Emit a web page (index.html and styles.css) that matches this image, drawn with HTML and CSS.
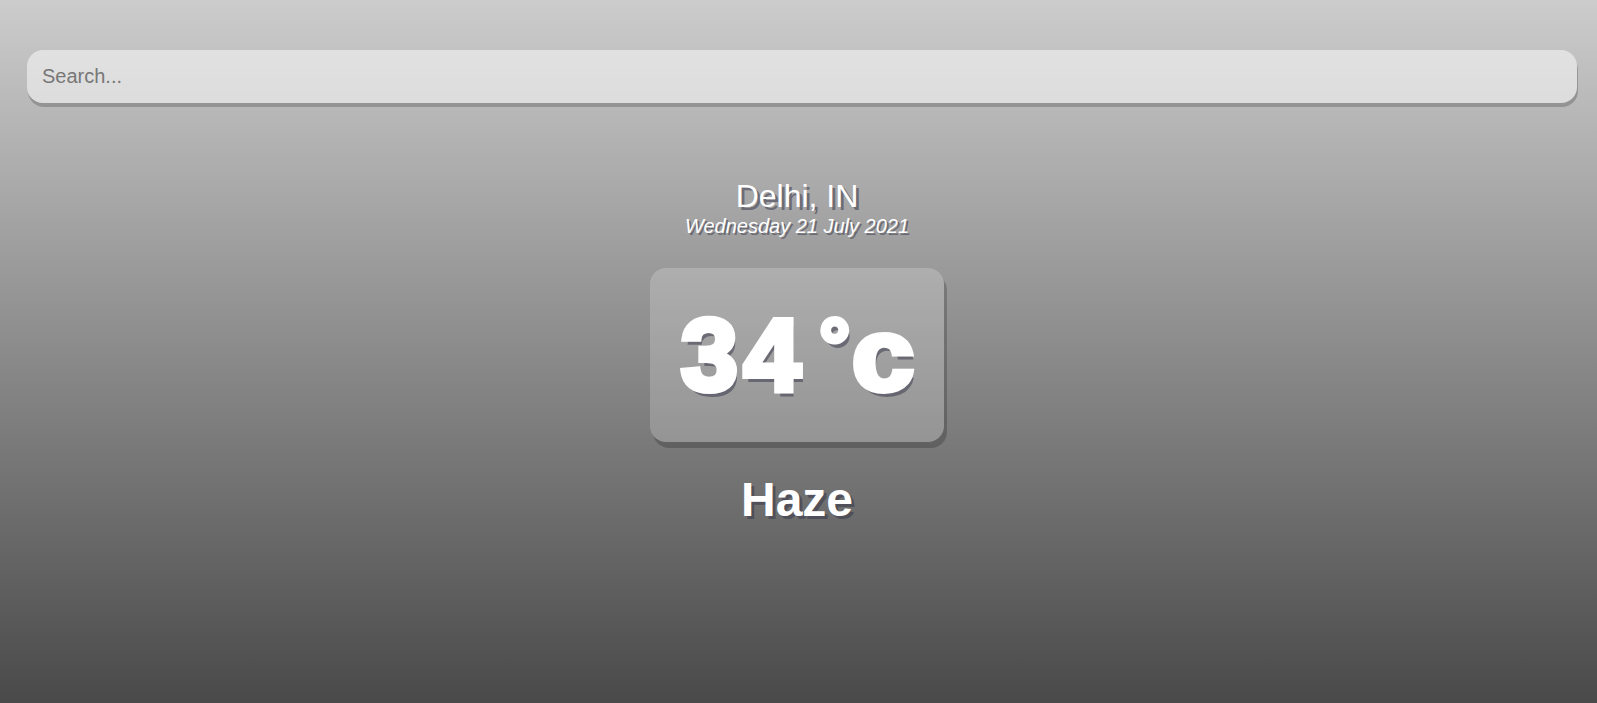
FILE: index.html
```html
<!DOCTYPE html>
<html lang="en">
<head>
<meta charset="utf-8">
<title>Weather</title>
<link rel="stylesheet" href="styles.css">
</head>
<body>
<main class="app">
  <div class="search-box">
    <input type="text" class="search-bar" placeholder="Search...">
  </div>
  <div class="content">
    <div class="location-box">
      <div class="location">Delhi, IN</div>
      <div class="date">Wednesday 21 July 2021</div>
    </div>
    <div class="weather-box">
      <div class="temp"><span class="t3">3</span><span class="t4">4</span><span class="tdeg">°</span><span class="tc">c</span></div>
      <div class="weather">Haze</div>
    </div>
  </div>
</main>
</body>
</html>
```
FILE: styles.css
```css
* { box-sizing: border-box; }
html, body { margin: 0; padding: 0; height: 100%; overflow: hidden; background: #fff; }
body { font-family: "Liberation Sans", Arial, sans-serif; }

.app {
  height: 703px;
  background-image: linear-gradient(to bottom, rgba(0,0,0,0.2) 0px, rgba(0,0,0,0.75) 753px);
  background-size: 100% 753px;
  background-repeat: no-repeat;
  padding-top: 50px;
}

.search-box {
  padding: 0 20px 0 27px;
  margin-bottom: 75px;
}

.search-bar {
  display: block;
  width: 100%;
  height: 53px;
  padding: 15px;
  appearance: none;
  border: none;
  outline: none;
  background-color: rgba(255,255,255,0.5);
  border-radius: 16px;
  box-shadow: 1px 4px rgba(0,0,0,0.2);
  color: #313131;
  font-family: "Liberation Sans", Arial, sans-serif;
  font-size: 20px;
}
.search-bar::placeholder { color: #777; }

.content {
  padding: 0 28px 0 25px;
}

.location {
  color: #fff;
  font-size: 32px;
  line-height: 37px;
  text-align: center;
  text-shadow: 3px 3px rgba(50,50,70,0.5);
}

.date {
  color: #fff;
  font-size: 20px;
  line-height: 23px;
  font-style: italic;
  text-align: center;
  text-shadow: 2px 2px rgba(50,50,70,0.5);
}

.weather-box { text-align: center; }

.temp {
  display: inline-block;
  margin: 30px auto;
  background-color: rgba(255,255,255,0.2);
  border-radius: 16px;
  padding: 15px 25px;
  height: 174px;
  width: 294px;
  color: #fff;
  font-size: 102px;
  font-weight: 700;
  line-height: 144px;
  -webkit-text-stroke: 6px #fff;
  text-shadow: 3px 6px rgba(50,50,70,0.5);
  text-align: left;
  white-space: nowrap;
  box-shadow: 3px 6px rgba(0,0,0,0.2);
}
.t3 { margin-left: 6px; }
.t4 { margin-left: 6px; }
.tdeg {
  margin-left: 19px;
  font-size: 76px;
  line-height: 1;
  vertical-align: 18px;
  -webkit-text-stroke: 5px #fff;
}
.tc {
  display: inline-block;
  margin-left: 2px;
  transform: scaleX(1.09);
  transform-origin: left center;
}

.weather {
  color: #fff;
  font-size: 48px;
  font-weight: 700;
  line-height: 55px;
  text-shadow: 3px 3px rgba(50,50,70,0.5);
}
```
